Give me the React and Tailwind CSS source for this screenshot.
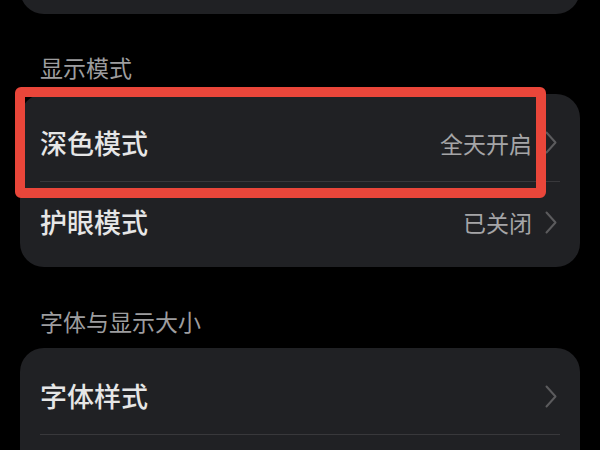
import React from "react";

const font = { fontFamily: '"Noto Sans CJK SC", "Noto Sans", sans-serif' };

function Chevron() {
  return (
    <svg width="12" height="23" viewBox="0 0 12 23" fill="none" className="ml-[13px] shrink-0">
      <path d="M1.5 1.5L10.5 11.5L1.5 21.5" stroke="#5b5b5d" strokeWidth="2" strokeLinecap="round" strokeLinejoin="round" />
    </svg>
  );
}

function Row({ label, value, className }) {
  return (
    <div className={"flex items-center pl-[20px] pr-[23px] " + className}>
      <span className="text-[27px] leading-[34px] font-medium text-[#e6e6e6]">{label}</span>
      <div className="ml-auto flex items-center">
        {value && <span className="text-[23px] leading-[30px] text-[#a5a5a7]">{value}</span>}
        <Chevron />
      </div>
    </div>
  );
}

function Divider() {
  return <div className="mx-[20px] h-px bg-[#38383b]" />;
}

export default function App() {
  return (
    <div className="relative w-[600px] h-[450px] overflow-hidden bg-black px-[20px]" style={font}>
      {/* previous card, scrolled mostly out of view */}
      <div className="h-[60px] -mt-[46px] rounded-[24px] bg-[#202124]" />

      <div className="pl-[20px] pt-[39px] pb-[13px] text-[23px] leading-[28px] text-[#9d9d9f]">显示模式</div>
      <div className="rounded-[24px] bg-[#202124]">
        <Row label="深色模式" value="全天开启" className="h-[87px] pt-[10px]" />
        <Divider />
        <Row label="护眼模式" value="已关闭" className="h-[85px] pb-[5px]" />
      </div>

      <div className="pl-[20px] pt-[40px] pb-[13px] text-[23px] leading-[28px] text-[#9d9d9f]">字体与显示大小</div>
      <div className="rounded-[24px] bg-[#202124]">
        <Row label="字体样式" className="h-[86px] pt-[10px]" />
        <Divider />
        {/* next row continues below the fold */}
        <div className="h-[86px]" />
      </div>

      {/* annotation frame */}
      <div className="absolute left-[15px] top-[87px] w-[531px] h-[111px] border-[10px] border-[#e9463a] rounded-[6px] pointer-events-none" />
    </div>
  );
}
